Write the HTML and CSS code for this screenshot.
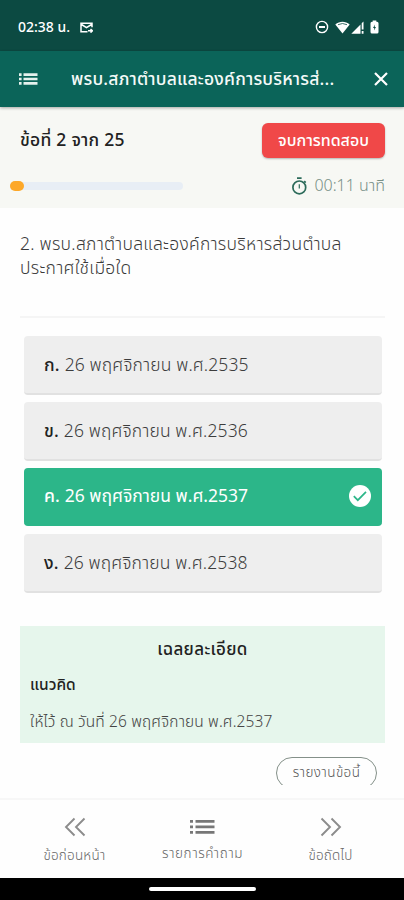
FILE: index.html
```
<!DOCTYPE html>
<html lang="th">
<head>
<meta charset="utf-8">
<title>พรบ.สภาตำบลและองค์การบริหารส่วนตำบล</title>
<link rel="stylesheet" href="styles.css">
</head>
<body>
<div class="status">
  <span class="clock">02:38 น.</span>
  <svg class="mail" width="13" height="11" viewBox="0 0 13 11" fill="none" stroke="#fff" stroke-width="1.5"><path d="M7.5 9.8H1V1.2h11v4M1.5 2.5l5 3.2 5-3.2M8 8.8h4M10.5 7l2 1.8-2 1.8"/></svg>
  <div class="signals">
    <svg width="14" height="14" viewBox="0 0 14 14" fill="none" stroke="#fff"><circle cx="7" cy="7" r="5.6" stroke-width="1.4"/><path d="M4 7h6" stroke-width="2"/></svg>
    <svg class="wifi" width="15" height="13" viewBox="0 0 15 13"><path fill="#fff" d="M.3 3.5C4.5-.1 10.500-.1 14.700 3.500L7.500 12.500z"/><path d="M3 3.700q4.500-2.400 9 0" fill="none" stroke="#0c4a42" stroke-width=".8"/></svg>
    <svg class="cell" width="13" height="13" viewBox="0 0 13 13" fill="#fff"><path d="M.3 12.700 9.500 3.500v9.200zM10.700 2.300 12.500.5v8h-1.800zM10.700 10h1.800v2.700h-1.800z"/></svg>
    <svg class="battery" width="9" height="14" viewBox="0 0 9 14"><path fill="#fff" d="M2.700.5h3.600v1.300H7a1.500 1.500 0 0 1 1.500 1.500V12A1.500 1.500 0 0 1 7 13.500H2A1.500 1.500 0 0 1 .5 12V3.300A1.500 1.500 0 0 1 2 1.800h.7z"/><path fill="#0c4a42" d="M5 4.500 3 8h1.300L4 10.500 6 7H4.700z"/></svg>
  </div>
</div>
<header class="appbar">
  <svg width="19" height="12" viewBox="0 0 19 12" fill="#e5f1ed"><path d="M0 .3h2.600v2.600H0zM0 4.700h2.600v2.600H0zM0 9.100h2.600v2.600H0zM4.500.3H18.500v2.600h-14zM4.500 4.700h14v2.600h-14zM4.500 9.100h14v2.600h-14z"/></svg>
  <h1 class="title">พรบ.สภาตำบลและองค์การบริหารส่...</h1>
  <svg width="14" height="14" viewBox="0 0 14 14" stroke="#fff" stroke-width="2.200"><path d="m1 1 12 12M13 1 1 13"/></svg>
</header>
<section class="summary">
  <div class="row">
    <span class="counter">ข้อที่ 2 จาก 25</span>
    <button class="finish">จบการทดสอบ</button>
  </div>
  <div class="row lower">
    <div class="track"><div class="fill"></div></div>
    <div class="timer">
      <svg width="17" height="18" viewBox="0 0 17 18" fill="none" stroke="#2c6b5a" stroke-width="1.700"><circle cx="8.300" cy="10.400" r="6.400"/><path d="M6 1.200h4.600M13.200 4.200l1.500 1.500"/><path d="M8.300 7.300v4.200" stroke-width="1.200"/></svg>
      <span class="time">00:11 นาที</span>
    </div>
  </div>
</section>
<main class="content">
  <p class="question">2. พรบ.สภาตำบลและองค์การบริหารส่วนตำบล<br>ประกาศใช้เมื่อใด</p>
  <div class="options">
    <div class="option"><b>ก.</b><span>26 พฤศจิกายน พ.ศ.2535</span></div>
    <div class="option"><b>ข.</b><span>26 พฤศจิกายน พ.ศ.2536</span></div>
    <div class="option chosen"><b>ค.</b><span>26 พฤศจิกายน พ.ศ.2537</span>
      <svg width="22" height="22" viewBox="0 0 22 22"><circle cx="11" cy="11" r="11" fill="#fff"/><path d="m4.800 11.200 4 4 8.200-8.400" fill="none" stroke="#2cb689" stroke-width="1.700"/></svg></div>
    <div class="option"><b>ง.</b><span>26 พฤศจิกายน พ.ศ.2538</span></div>
  </div>
  <section class="answer">
    <h2 class="heading">เฉลยละเอียด</h2>
    <h3 class="sub">แนวคิด</h3>
    <p class="text">ให้ไว้ ณ วันที่ 26 พฤศจิกายน พ.ศ.2537</p>
  </section>
  <div class="clip"><button class="report">รายงานข้อนี้</button></div>
</main>
<nav class="tabs">
  <div class="tab"><svg width="22" height="20" viewBox="0 0 22 20" fill="none" stroke="#8c8c8c" stroke-width="1.900"><path d="M10.500 1.500 2 10l8.500 8.500M20.500 1.500 12 10l8.500 8.500"/></svg><span>ข้อก่อนหน้า</span></div>
  <div class="tab list"><svg width="25" height="20" viewBox="0 0 25 20" fill="#777"><path d="M0 3h3v2.800H0zM0 8.500h3v2.800H0zM0 14h3v2.800H0zM5.500 3h19v2.800h-19zM5.500 8.500h19v2.800h-19zM5.500 14h19v2.800h-19z"/></svg><span>รายการคำถาม</span></div>
  <div class="tab"><svg width="22" height="20" viewBox="0 0 22 20" fill="none" stroke="#8c8c8c" stroke-width="1.900"><path d="M1.500 1.500 10 10l-8.500 8.500M11.500 1.500 20 10l-8.500 8.500"/></svg><span>ข้อถัดไป</span></div>
</nav>
<div class="home"><div class="pill"></div></div>
</body>
</html>
```
FILE: styles.css
```
* { box-sizing: border-box; }
body { margin: 0; width: 404px; height: 900px; overflow: hidden; display: flex; flex-direction: column; background: #fefefe; color: #555; font-family: "Noto Sans Thai", "Noto Sans", sans-serif; font-weight: 300; white-space: nowrap; }
h1, h2, h3, p { margin: 0; }
button { font: inherit; padding: 0; }
svg { flex: none; display: block; }
.status { flex: none; height: 51px; padding: 3px 25px 0 18px; display: flex; align-items: center; background: #0c4a42; color: #fff; }
.clock { font-size: 14px; font-weight: 500; width: 62px; }
.signals { margin-left: auto; display: flex; align-items: center; }
.wifi { margin-left: 6px; }
.cell { margin-left: 1px; }
.battery { margin-left: 6px; }
.appbar { position: relative; flex: none; height: 56px; padding: 0 16px 0 19px; display: flex; align-items: center; background: #0b6459; color: #f4faf8; box-shadow: 0 1px 3px #0005; }
.title { margin: 0 auto 0 33px; padding-top: 1px; font-size: 17.500px; font-weight: 500; letter-spacing: .2px; }
.summary { flex: none; height: 101px; padding: 16px 19px 0 20px; background: #f7f8f4; }
.row { display: flex; align-items: center; justify-content: space-between; height: 35px; }
.counter { font-size: 17.500px; font-weight: 500; color: #222; letter-spacing: .25px; }
.finish { width: 123px; height: 35px; border: 0; border-radius: 6px; background: #f04848; color: #fff; font-size: 16px; font-weight: 500; box-shadow: 0 1px 2px #0004; }
.lower { margin-top: 10px; }
.track { width: 173px; height: 8px; margin-left: -10px; border-radius: 4px; background: #e8eef5; }
.fill { width: 14px; height: 10px; margin-top: -1px; border-radius: 5px; background: #fda829; }
.timer { display: flex; align-items: center; color: #789087; font-size: 16px; gap: 6px; }
.content { flex: none; height: 590px; padding: 25px 19px 0 20px; }
.question { height: 85px; border-bottom: 2px solid #f5f5f5; font-size: 17.500px; line-height: 24px; color: #3a3a3a; letter-spacing: .27px; }
.options { padding: 18px 3px 0 4px; }
.option { display: flex; align-items: center; gap: 5px; height: 59px; margin-bottom: 7px; padding: 1px 11px 0 20px; border-radius: 4px; background: #eee; border-bottom: 2px solid #e1e1e1; font-size: 17.500px; color: #3c3c3c; letter-spacing: .13px; }
.option b { font-weight: 500; color: #222; }
.option svg { margin: -1px 0 0 auto; }
.chosen, .chosen b { color: #fff; }
.chosen { background: #2cb689; border-bottom-color: #2cb689; font-weight: 400; letter-spacing: 0; height: 58px; margin-bottom: 8px; }
.answer { margin-top: 33px; height: 117px; padding: 10px 10px 0; background: #e6f6ec; }
.heading { text-align: center; font-size: 17px; line-height: 28px; font-weight: 500; color: #222; letter-spacing: .35px; }
.sub { margin-top: 10px; font-size: 15.500px; line-height: 24px; font-weight: 500; color: #222; }
.text { margin-top: 13px; font-size: 15.500px; line-height: 24px; color: #444; letter-spacing: .14px; }
.clip { height: 28px; margin: 14px 8px 0 0; overflow: hidden; display: flex; justify-content: flex-end; }
.report { flex: none; width: 101px; height: 32px; border: 1px solid #849089; border-radius: 16px; background: #fefefe; color: #555; font-size: 13.500px; letter-spacing: .4px; }
.tabs { flex: none; height: 80px; display: flex; justify-content: space-between; padding: 17px 26px 0 27px; border-top: 2px solid #f7f7f7; color: #666; font-size: 13.500px; letter-spacing: .2px; }
.tab { width: 95px; display: flex; flex-direction: column; align-items: center; gap: 9px; }
.list { gap: 7px; letter-spacing: .6px; }
.home { flex: 1; background: #000; display: flex; justify-content: center; padding-top: 9px; }
.pill { width: 107px; height: 4px; border-radius: 2px; background: #fff; }
```
